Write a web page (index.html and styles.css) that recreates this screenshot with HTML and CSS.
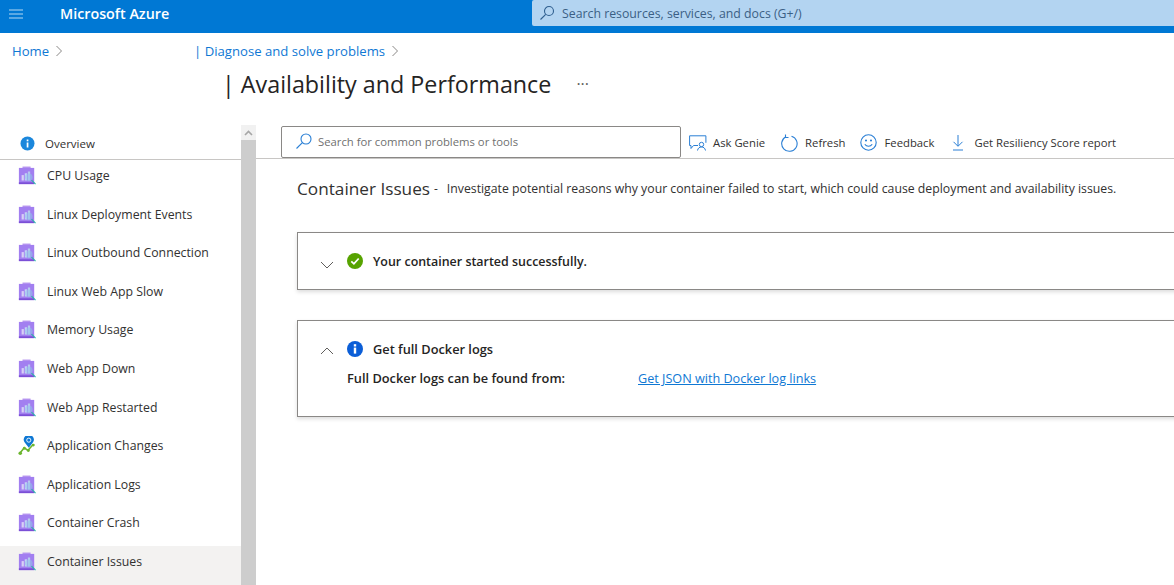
FILE: index.html

```html
<!DOCTYPE html>
<html lang="en">
<head>
  <meta charset="UTF-8" />
  <meta name="viewport" content="width=device-width, initial-scale=1.0" />
  <title>Availability and Performance - Microsoft Azure</title>
  <link rel="stylesheet" href="styles.css">
</head>
<body>
  <svg class="defs" width="0" height="0">
    <symbol id="tool" viewBox="0 0 20 22">
      <rect x="5" y="0.500" width="9" height="3" fill="#b796f0"/>
      <rect x="1" y="2" width="17" height="18" fill="#a27ff0"/>
      <rect x="1" y="18" width="17" height="2" fill="#7b4fd6"/>
      <rect x="4" y="10" width="2.500" height="6" fill="#d8d0f5"/>
      <rect x="7.500" y="8" width="2.500" height="8" fill="#c8d4f5"/>
      <rect x="11" y="6" width="2.500" height="10" fill="#b8c8f0"/>
      <circle cx="12" cy="12.500" r="4.200" fill="#8fc4ea" fill-opacity="0.55"/>
      <path d="M15 15.500l4.500 4.500" stroke="#2bb5a8" stroke-width="1.300"/>
    </symbol>
  </svg>

  <header class="topbar">
    <div class="brand">
      <svg class="menu-icon" width="16" height="12" viewBox="0 0 16 12"><path d="M1 2h14M1 6h14M1 10h14" stroke="#b3d7f2" stroke-width="1.200"/></svg>
      <span class="brand-name">Microsoft Azure</span>
    </div>
    <div class="global-search">
      <svg width="16" height="16" viewBox="0 0 16 16" fill="none" stroke="#2f5f8f" stroke-width="1.100"><circle cx="10" cy="6" r="4.500"/><path d="M6.700 9.300L1.500 14.500"/></svg>
      <span>Search resources, services, and docs (G+/)</span>
    </div>
  </header>

  <nav class="crumbs">
    <a class="crumb-home">Home</a>
    <svg class="chev" width="8" height="12" viewBox="0 0 8 12" fill="none" stroke="#8a8886"><path d="M1.500 1l5 5-5 5"/></svg>
    <a class="crumb-diag">| Diagnose and solve problems</a>
    <svg class="chev" width="8" height="12" viewBox="0 0 8 12" fill="none" stroke="#8a8886"><path d="M1.500 1l5 5-5 5"/></svg>
  </nav>

  <div class="title-row">
    <h1>| Availability and Performance</h1>
    <span class="more">···</span>
  </div>

  <div class="layout">
    <aside class="sidebar">
      <div class="side-list">
        <div class="overview">
          <svg width="15" height="15" viewBox="0 0 15 15"><circle cx="7.500" cy="7.500" r="7" fill="#1b87dc"/><rect x="6.700" y="6.500" width="1.700" height="5" fill="#fff"/><rect x="6.700" y="3.500" width="1.700" height="1.800" fill="#fff"/></svg>
          <span>Overview</span>
        </div>
        <div class="side-item"><svg class="tool-icon"><use href="#tool"/></svg><span>CPU Usage</span></div>
        <div class="side-item"><svg class="tool-icon"><use href="#tool"/></svg><span>Linux Deployment Events</span></div>
        <div class="side-item"><svg class="tool-icon"><use href="#tool"/></svg><span>Linux Outbound Connection</span></div>
        <div class="side-item"><svg class="tool-icon"><use href="#tool"/></svg><span>Linux Web App Slow</span></div>
        <div class="side-item"><svg class="tool-icon"><use href="#tool"/></svg><span>Memory Usage</span></div>
        <div class="side-item"><svg class="tool-icon"><use href="#tool"/></svg><span>Web App Down</span></div>
        <div class="side-item"><svg class="tool-icon"><use href="#tool"/></svg><span>Web App Restarted</span></div>
        <div class="side-item">
          <svg class="tool-icon" viewBox="0 0 20 22"><path d="M2 19l5-6 4 3 6-7" fill="none" stroke="#6bb52e" stroke-width="1.800"/><circle cx="2.500" cy="19" r="2" fill="#6bb52e"/><circle cx="7" cy="13.500" r="1.600" fill="#6bb52e"/><circle cx="11.500" cy="16" r="1.600" fill="#6bb52e"/><circle cx="17" cy="10" r="1.600" fill="#6bb52e"/><path d="M12 13l-4.500-6a5.500 5.500 0 1 1 9 0z" fill="#0f78d4"/><circle cx="12" cy="4.500" r="2.300" fill="none" stroke="#fff" stroke-width="1"/></svg>
          <span>Application Changes</span>
        </div>
        <div class="side-item"><svg class="tool-icon"><use href="#tool"/></svg><span>Application Logs</span></div>
        <div class="side-item"><svg class="tool-icon"><use href="#tool"/></svg><span>Container Crash</span></div>
        <div class="side-item active"><svg class="tool-icon"><use href="#tool"/></svg><span>Container Issues</span></div>
      </div>
      <div class="scrollbar">
        <div class="scroll-up"><svg width="9" height="6" viewBox="0 0 9 6" fill="none" stroke="#a6a6a6" stroke-width="1.600"><path d="M1 5l3.500-3.500L8 5"/></svg></div>
      </div>
    </aside>

    <main class="content">
      <div class="toolbar">
        <div class="tool-search">
          <svg width="18" height="18" viewBox="0 0 18 18" fill="none" stroke="#2a7fd5" stroke-width="1.100"><circle cx="11" cy="7" r="5"/><path d="M7.400 10.600L1.500 16.500"/></svg>
          <span>Search for common problems or tools</span>
        </div>
        <div class="action genie">
          <svg width="18" height="16" viewBox="0 0 18 16" fill="none" stroke="#2a7fd5" stroke-width="1"><path d="M9 10.500H4.500L2 13.500v-3H.6V.8h16.300v7"/><circle cx="12.500" cy="9.500" r="2.200"/><path d="M8.500 15.500c.5-2.500 2-3.500 4-3.500s3.500 1 4 3.500"/></svg>
          <span>Ask Genie</span>
        </div>
        <div class="action refresh">
          <svg width="18" height="18" viewBox="0 0 18 18" fill="none" stroke="#2a7fd5" stroke-width="1.100"><path d="M6 2.700a7.700 7.700 0 1 0 5.500-.5"/><path d="M5.500.5v3h3"/></svg>
          <span>Refresh</span>
        </div>
        <div class="action feedback">
          <svg width="17" height="17" viewBox="0 0 17 17" fill="none" stroke="#2a7fd5" stroke-width="1.100"><circle cx="8.500" cy="8.500" r="7.700"/><path d="M4.800 10.200c1.800 2.700 5.600 2.700 7.400 0"/><circle cx="6" cy="6.500" r=".5"/><circle cx="11" cy="6.500" r=".5"/></svg>
          <span>Feedback</span>
        </div>
        <div class="action resiliency">
          <svg width="12" height="17" viewBox="0 0 12 17" fill="none" stroke="#2a7fd5" stroke-width="1"><path d="M6 1v11M1.500 7.800L6 12.300l4.500-4.500M1 16h10"/></svg>
          <span>Get Resiliency Score report</span>
        </div>
      </div>

      <div class="issues">
        <div class="issues-head">
          <h2>Container Issues</h2>
          <span class="dash">-</span>
          <span class="issues-desc">Investigate potential reasons why your container failed to start, which could cause deployment and availability issues.</span>
        </div>

        <section class="card card-ok">
          <svg class="card-chev" width="14" height="8" viewBox="0 0 14 8" fill="none" stroke="#605e5c"><path d="M1 1l6 6 6-6"/></svg>
          <svg class="card-icon" width="16" height="16" viewBox="0 0 16 16"><circle cx="8" cy="8" r="8" fill="#57a300"/><path d="M4.300 8.300l2.600 2.500 4.800-5.300" fill="none" stroke="#fff" stroke-width="1.800"/></svg>
          <strong>Your container started successfully.</strong>
        </section>

        <section class="card card-logs">
          <div class="card-row">
            <svg class="card-chev" width="14" height="8" viewBox="0 0 14 8" fill="none" stroke="#605e5c"><path d="M1 7l6-6 6 6"/></svg>
            <svg class="card-icon" width="16" height="16" viewBox="0 0 16 16"><circle cx="8" cy="8" r="8" fill="#0b5ed7"/><rect x="6.800" y="6.600" width="2.400" height="6" fill="#fff"/><rect x="6.800" y="3.200" width="2.400" height="2.300" fill="#fff"/></svg>
            <strong>Get full Docker logs</strong>
          </div>
          <div class="log-links">
            <strong>Full Docker logs can be found from:</strong>
            <a href="#">Get JSON with Docker log links</a>
          </div>
        </section>
      </div>
    </main>
  </div>
</body>
</html>
```

FILE: styles.css

```css
html, body {
  height: 100%;
}
body {
  margin: 0;
  height: 585px;
  overflow: hidden;
  background: #ffffff;
  color: #323130;
  font-family: "Open Sans", "Noto Sans", Arial, sans-serif;
  font-size: 12px;
}
.defs {
  position: absolute;
}
svg {
  display: block;
  flex: none;
}

.topbar {
  display: flex;
  height: 33px;
  background: #0078d4;
}
.brand {
  display: flex;
  align-items: center;
  width: 532px;
  height: 27px;
}
.menu-icon {
  margin-left: 8px;
}
.brand-name {
  margin-left: 36px;
  color: #ffffff;
  font-size: 14.300px;
  font-weight: 600;
}
.global-search {
  flex: 1;
  display: flex;
  align-items: center;
  gap: 7px;
  height: 26px;
  padding-left: 7px;
  border-radius: 2px 0 0 2px;
  background: #b3d4f1;
  color: #3b5f85;
  font-size: 12.300px;
}

.crumbs {
  display: flex;
  align-items: center;
  height: 35px;
  margin-bottom: 1px;
  padding-left: 12px;
  color: #0f78d4;
  font-size: 13.150px;
}
.crumb-home {
  width: 43px;
}
.crumbs .chev:first-of-type {
  margin-right: 131px;
}
.crumbs .chev:last-of-type {
  margin: 0 0 0 6px;
}

.title-row {
  display: flex;
  align-items: center;
  height: 30px;
  padding-left: 222px;
}
h1 {
  margin: 0;
  font-size: 23.300px;
  font-weight: 500;
  line-height: 30px;
  color: #252423;
}
.more {
  margin-left: 25px;
  color: #605e5c;
  font-size: 16px;
}

.layout {
  display: flex;
  height: 460px;
  margin-top: 26px;
}

.sidebar {
  display: flex;
  flex: none;
  width: 256px;
}
.side-list {
  width: 241px;
}
.overview {
  display: flex;
  align-items: center;
  box-sizing: border-box;
  height: 35px;
  gap: 10px;
  padding: 3px 0 0 20px;
  border-bottom: 1px solid #c8c6c4;
  font-size: 11.500px;
  font-weight: 500;
}
.side-item {
  display: flex;
  box-sizing: border-box;
  height: 38.600px;
  gap: 11px;
  padding: 6px 0 0 18px;
  font-size: 12.300px;
}
.side-item span {
  line-height: 20px;
}
.side-item.active {
  background: #f3f2f1;
}
.tool-icon {
  width: 18px;
  height: 20px;
}
.scrollbar {
  width: 15px;
  background: #cdcdcd;
}
.scroll-up {
  display: flex;
  align-items: center;
  justify-content: center;
  height: 15px;
  background: #f1f1f1;
}

.content {
  flex: 1;
  min-width: 0;
  overflow: hidden;
}
.toolbar {
  display: flex;
  align-items: center;
  box-sizing: border-box;
  height: 34px;
  padding-left: 25px;
  border-bottom: 1px solid #c8c6c4;
  font-size: 11.300px;
}
.tool-search {
  display: flex;
  align-items: center;
  box-sizing: border-box;
  width: 400px;
  height: 32px;
  gap: 5px;
  margin-top: 1px;
  padding: 0 0 2px 13px;
  border: 1px solid #8a8886;
  border-radius: 2px;
  color: #707070;
}
.action {
  display: flex;
  align-items: center;
  gap: 7px;
  padding-top: 2px;
}
.genie {
  gap: 6px;
  margin-left: 8px;
}
.refresh {
  margin-left: 15px;
}
.feedback {
  margin-left: 15px;
}
.resiliency {
  gap: 10px;
  margin-left: 18px;
}

.issues {
  padding-left: 41px;
}
.issues-head {
  display: flex;
  align-items: center;
  height: 24px;
  margin-top: 17px;
}
h2 {
  margin: 0;
  font-size: 17.200px;
  font-weight: 500;
}
.dash {
  margin: 0 9px 0 4px;
}
.issues-desc {
  font-size: 12.270px;
}
.card {
  box-sizing: border-box;
  width: 1000px;
  border: 1px solid #8a8886;
  background: #ffffff;
  box-shadow: 0 2px 4px rgba(0, 0, 0, 0.14);
}
.card strong {
  font-weight: 600;
  color: #252423;
  font-size: 12.800px;
}
.card-ok strong {
  font-size: 12.450px;
}
.card-ok {
  display: flex;
  align-items: center;
  height: 58px;
  margin-top: 32px;
  padding-left: 22px;
}
.card-ok .card-chev {
  margin-top: 8px;
}
.card-logs {
  height: 97px;
  margin-top: 30px;
  padding: 19px 0 0 22px;
}
.card-row {
  display: flex;
  align-items: center;
}
.card-row .card-chev {
  margin-top: 4px;
}
.card-icon {
  margin: 0 10px 0 13px;
}
.log-links {
  display: flex;
  margin-top: 11px;
  padding-left: 27px;
}
.log-links strong {
  width: 291px;
}
.log-links a {
  color: #0f78d4;
  font-size: 12.640px;
}
```
